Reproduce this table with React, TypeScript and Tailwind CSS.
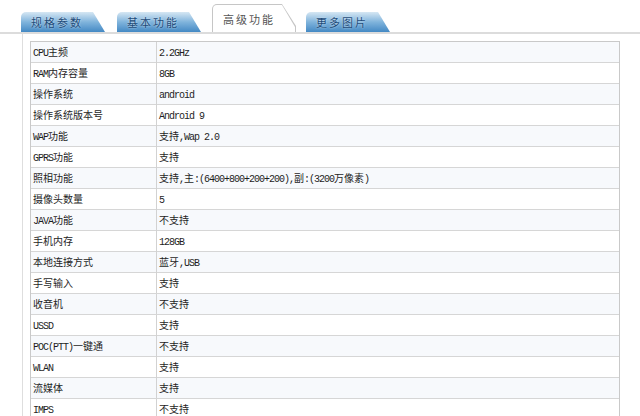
import React from "react";

const rows: [string, string][] = [
  ["CPU主频", "2.2GHz"],
  ["RAM内存容量", "8GB"],
  ["操作系统", "android"],
  ["操作系统版本号", "Android 9"],
  ["WAP功能", "支持,Wap 2.0"],
  ["GPRS功能", "支持"],
  ["照相功能", "支持,主:(6400+800+200+200),副:(3200万像素)"],
  ["摄像头数量", "5"],
  ["JAVA功能", "不支持"],
  ["手机内存", "128GB"],
  ["本地连接方式", "蓝牙,USB"],
  ["手写输入", "支持"],
  ["收音机", "不支持"],
  ["USSD", "支持"],
  ["POC(PTT)一键通", "不支持"],
  ["WLAN", "支持"],
  ["流媒体", "支持"],
  ["IMPS", "不支持"],
];

function Mixed({ text }: { text: string }) {
  const parts = text.split(/([\u0000-\u00ff]+)/).filter((p) => p.length > 0);
  return (
    <>
      {parts.map((p, i) =>
        /^[\u0000-\u00ff]+$/.test(p) ? (
          <span
            key={i}
            className="font-['Liberation_Mono',monospace] text-[10px] tracking-[-1px] whitespace-pre"
          >
            {p}
          </span>
        ) : (
          <span key={i}>{p}</span>
        )
      )}
    </>
  );
}

function BlueTab({ label, className = "" }: { label: string; className?: string }) {
  return (
    <div
      className={
        "w-[84px] h-[20px] rounded-tl-[5px] bg-linear-to-b from-[#d6e7f3] via-[#80b4dc] to-[#4389c4] [clip-path:polygon(0_0,calc(100%-12px)_0,100%_100%,0_100%)] flex items-center pl-[10px] pt-[1px] " +
        className
      }
    >
      <span className="text-[11px] tracking-[2px] leading-none text-[#1d4b79] [text-shadow:0_0_2px_rgba(255,255,255,0.7)] font-['Noto_Sans_CJK_SC',sans-serif]">
        {label}
      </span>
    </div>
  );
}

export default function App() {
  return (
    <div className="w-[640px] h-[416px] bg-white overflow-hidden font-['Noto_Sans_CJK_SC',sans-serif]">
      <div className="flex items-end h-[32px] pl-[21px]">
        <BlueTab label="规格参数" />
        <BlueTab label="基本功能" className="ml-[12px]" />
        <div className="ml-[11px] w-[84px] h-[28px] rounded-tl-[5px] bg-[#c6c6c6] px-[1px] pt-[1px] [clip-path:polygon(0_0,calc(100%-14px)_0,100%_22px,100%_100%,0_100%)]">
          <div className="h-full rounded-tl-[4px] bg-white [clip-path:polygon(0_0,calc(100%-13px)_0,100%_22px,100%_100%,0_100%)] flex items-center pl-[10px] pt-[2px]">
            <span className="text-[11px] tracking-[2px] leading-none text-[#555]">高级功能</span>
          </div>
        </div>
        <BlueTab label="更多图片" className="ml-[10px]" />
      </div>
      <div className="h-[2px] bg-[#dcdcdc]" />
      <div className="ml-[22px] border-l border-[#dedede] pl-[7px] pt-[7px] h-full">
        <div className="w-[590px] border border-[#c9c9c9]">
          {rows.map(([k, v], i) => (
            <div
              key={k}
              className={
                "grid grid-cols-[126px_1fr] h-[21px] border-b border-[#d6d6d6] text-[10px] leading-[20px] text-[#1e1e1e] " +
                (i % 2 === 0 ? "bg-[#f7f9fc]" : "bg-white")
              }
            >
              <div className="border-r border-[#d2d2d2] pl-[2px] whitespace-nowrap">
                <Mixed text={k} />
              </div>
              <div className="pl-[2px] whitespace-nowrap">
                <Mixed text={v} />
              </div>
            </div>
          ))}
        </div>
      </div>
    </div>
  );
}
